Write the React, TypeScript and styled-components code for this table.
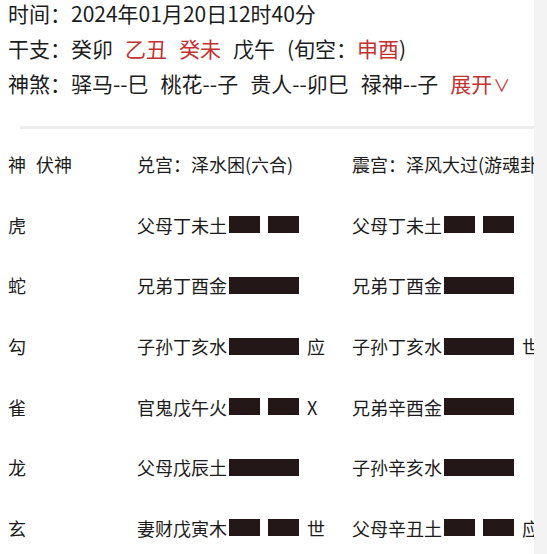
import React from "react";
import styled, { createGlobalStyle } from "styled-components";

const Global = createGlobalStyle`
  html, body { margin: 0; padding: 0; background: #fff; }
  body { font-family: "Noto Sans CJK SC", "Noto Sans", sans-serif; color: #1c1c1c; }
`;

const Page = styled.div`
  display: flex;
  width: 100vw;
  height: 100vh;
  overflow: hidden;
`;

const Main = styled.div`
  flex: 1;
  min-width: 0;
  overflow: hidden;
  background: #fff;
`;

const Side = styled.div`
  width: 13px;
  flex: none;
  background: #f3f3f3;
`;

const Info = styled.div`
  margin-top: -5px;
  padding-left: 8px;
  font-size: 21px;
`;

const InfoLine = styled.div`
  display: flex;
  align-items: center;
  height: 35px;
  white-space: nowrap;
`;

const Label = styled.span`
  width: 63px;
  flex: none;
`;

const Groups = styled.span`
  display: flex;
  align-items: center;
  gap: 12px;
`;

const Word = styled.span<{ $red?: boolean }>`
  color: ${(p) => (p.$red ? "#c33131" : "inherit")};
`;

const Chevron = styled.span`
  font-size: 17px;
  margin-left: 1px;
`;

const Divider = styled.div`
  margin: 26px 0 0 20px;
  height: 3px;
  background: #eeeeee;
`;

const Table = styled.div`
  margin-top: 5px;
  padding-left: 8px;
  display: grid;
  grid-template-columns: 28px 101px 215px 215px;
  grid-auto-rows: 60.6px;
  align-items: center;
  font-size: 18px;
  white-space: nowrap;
`;

const Cell = styled.div`
  display: flex;
  align-items: center;
  min-width: 0;
`;

const Name = styled.span`
  width: 90px;
  flex: none;
`;

const Bars = styled.span`
  display: flex;
  justify-content: space-between;
  width: 70px;
  margin-left: 2px;
  flex: none;
`;

const Bar = styled.span<{ $w: number }>`
  display: block;
  width: ${(p) => p.$w}px;
  height: 17px;
  background: #231717;
`;

const Mark = styled.span`
  margin-left: 8px;
`;

type Yao = { t: string; yin: boolean; mark?: string };

const rows: { god: string; a: Yao; b: Yao }[] = [
  { god: "虎", a: { t: "父母丁未土", yin: true }, b: { t: "父母丁未土", yin: true } },
  { god: "蛇", a: { t: "兄弟丁酉金", yin: false }, b: { t: "兄弟丁酉金", yin: false } },
  { god: "勾", a: { t: "子孙丁亥水", yin: false, mark: "应" }, b: { t: "子孙丁亥水", yin: false, mark: "世" } },
  { god: "雀", a: { t: "官鬼戊午火", yin: true, mark: "X" }, b: { t: "兄弟辛酉金", yin: false } },
  { god: "龙", a: { t: "父母戊辰土", yin: false }, b: { t: "子孙辛亥水", yin: false } },
  { god: "玄", a: { t: "妻财戊寅木", yin: true, mark: "世" }, b: { t: "父母辛丑土", yin: true, mark: "应" } },
];

const YaoCell = ({ y }: { y: Yao }) => (
  <Cell>
    <Name>{y.t}</Name>
    <Bars>
      {y.yin ? (
        <>
          <Bar $w={31} />
          <Bar $w={31} />
        </>
      ) : (
        <Bar $w={70} />
      )}
    </Bars>
    {y.mark && <Mark>{y.mark}</Mark>}
  </Cell>
);

export default function App() {
  return (
    <>
      <Global />
      <Page>
        <Main>
          <Info>
            <InfoLine>
              <Label>时间：</Label>
              <span>2024年01月20日12时40分</span>
            </InfoLine>
            <InfoLine>
              <Label>干支：</Label>
              <Groups>
                <Word>癸卯</Word>
                <Word $red>乙丑</Word>
                <Word $red>癸未</Word>
                <Word>戊午</Word>
                <Word>
                  (旬空：<Word $red>申酉</Word>)
                </Word>
              </Groups>
            </InfoLine>
            <InfoLine>
              <Label>神煞：</Label>
              <Groups>
                <Word>驿马--巳</Word>
                <Word>桃花--子</Word>
                <Word>贵人--卯巳</Word>
                <Word>禄神--子</Word>
                <Word $red>
                  展开<Chevron>∨</Chevron>
                </Word>
              </Groups>
            </InfoLine>
          </Info>
          <Divider />
          <Table>
            <Cell>神</Cell>
            <Cell>伏神</Cell>
            <Cell>兑宫：泽水困(六合)</Cell>
            <Cell>震宫：泽风大过(游魂卦)</Cell>
            {rows.map((r) => (
              <React.Fragment key={r.god}>
                <Cell>{r.god}</Cell>
                <Cell />
                <YaoCell y={r.a} />
                <YaoCell y={r.b} />
              </React.Fragment>
            ))}
          </Table>
        </Main>
        <Side />
      </Page>
    </>
  );
}
